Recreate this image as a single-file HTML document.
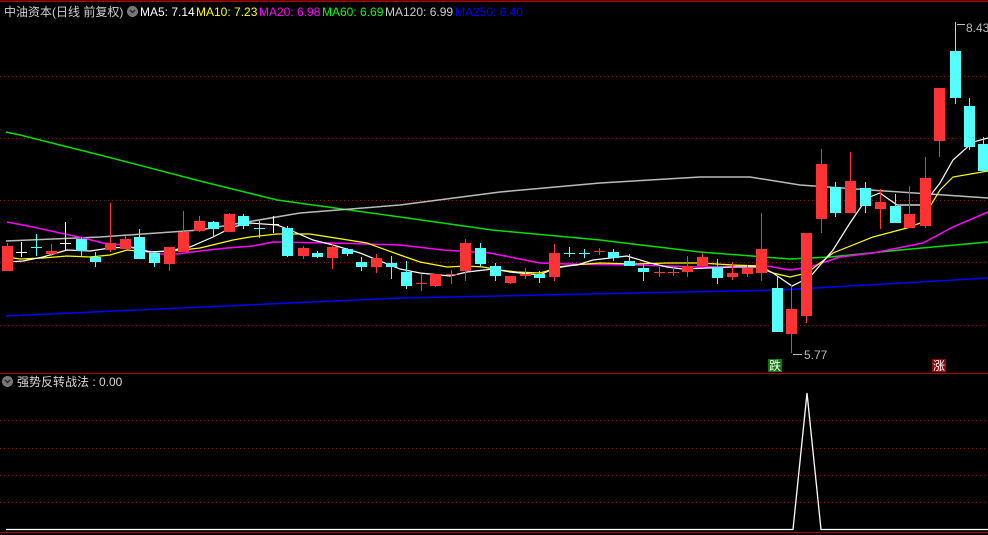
<!DOCTYPE html>
<html><head><meta charset="utf-8"><style>
html,body{margin:0;padding:0;background:#000;width:988px;height:535px;overflow:hidden}
svg{display:block}
text{font-family:"Liberation Sans","Noto Sans CJK SC",sans-serif;font-size:12px}
</style></head><body>
<svg width="988" height="535" viewBox="0 0 988 535" xmlns="http://www.w3.org/2000/svg" shape-rendering="crispEdges">
<rect width="988" height="535" fill="#000"/>
<line x1="0" y1="1" x2="988" y2="1" stroke="#b00000" stroke-width="1.5"/>
<g stroke="#8b1010" stroke-dasharray="1,3">
<line x1="0" y1="76.5" x2="988" y2="76.5"/><line x1="0" y1="138.5" x2="988" y2="138.5"/>
<line x1="0" y1="200.5" x2="988" y2="200.5"/><line x1="0" y1="262.5" x2="988" y2="262.5"/>
<line x1="0" y1="325.5" x2="988" y2="325.5"/>
<line x1="0" y1="420.5" x2="988" y2="420.5"/><line x1="0" y1="448.5" x2="988" y2="448.5"/>
<line x1="0" y1="475.5" x2="988" y2="475.5"/><line x1="0" y1="502.5" x2="988" y2="502.5"/>
</g>
<line x1="0" y1="373.5" x2="988" y2="373.5" stroke="#b00000"/>
<line x1="0" y1="532.5" x2="988" y2="532.5" stroke="#b00000"/>
<g fill="none" stroke-width="1.2" shape-rendering="auto">
<polyline stroke="#0000ff" stroke-width="1.5" points="6,316 400,298 780,290 988,278"/>
<polyline stroke="#00e000" stroke-width="1.5" points="6,132 20,135 100,155 200,181 277,200 400,217 492,230 600,240 700,252 790,259 830,257 900,250 988,242"/>
<polyline stroke="#bbbbbb" stroke-width="1.5" points="6,241 100,237 200,230 300,213 400,205 500,192 600,183 700,177 750,177 800,185 870,190 988,198"/>
<polyline stroke="#ff00ff" stroke-width="1.5" points="7,222 33,227 60,233 83,238 103,243 123,245 140,249 160,254 177,254 200,251 227,248 253,246 273,242 333,243 400,245 443,250 490,253 540,263 567,264 633,265 700,267 767,266 790,270 810,267 840,257 873,253 923,243 953,227 988,212"/>
<polyline stroke="#ffff00" points="7,257 20,259 43,258 67,256 90,257 110,255 127,250 150,252 173,251 200,248 233,240 250,237 277,234 310,234 367,243 400,255 420,262 447,267 467,266 483,267 500,270 517,272 540,273 557,268 573,265 600,263 633,264 667,263 700,263 733,265 760,266 773,273 790,277 807,273 833,253 873,237 907,228 920,223 940,190 953,177 988,171"/>
<polyline stroke="#ffffff" points="7,262 23,261 43,257 67,250 90,251 110,248 130,247 150,252 167,251 190,247 213,237 233,227 250,223 277,225 290,230 313,240 333,245 360,253 400,269 420,273 450,276 467,272 493,269 510,272 540,275 557,267 577,265 593,260 627,256 650,263 667,267 683,269 733,267 757,267 773,273 792,286 810,277 833,250 850,223 867,198 880,193 897,205 923,205 940,183 953,160 973,142 988,138"/>
</g>
<g>
<line x1="7.5" y1="243" x2="7.5" y2="271" stroke="#ff3333"/><rect x="2" y="246" width="11" height="25" fill="#ff3333"/>
<line x1="21.5" y1="242" x2="21.5" y2="257" stroke="#fff"/><rect x="16" y="252" width="11" height="1" fill="#fff"/>
<line x1="36.5" y1="234" x2="36.5" y2="256" stroke="#54ffff"/><rect x="31" y="247" width="11" height="1" fill="#54ffff"/>
<line x1="51.5" y1="244" x2="51.5" y2="256" stroke="#ff3333"/><rect x="46" y="251" width="11" height="3" fill="#ff3333"/>
<line x1="65.5" y1="222" x2="65.5" y2="251" stroke="#fff"/><rect x="60" y="243" width="11" height="1" fill="#fff"/>
<line x1="81.5" y1="237" x2="81.5" y2="257" stroke="#54ffff"/><rect x="76" y="239" width="11" height="12" fill="#54ffff"/>
<line x1="95.5" y1="252" x2="95.5" y2="267" stroke="#54ffff"/><rect x="90" y="257" width="11" height="5" fill="#54ffff"/>
<line x1="110.5" y1="203" x2="110.5" y2="252" stroke="#ff3333"/><rect x="105" y="243" width="11" height="7" fill="#ff3333"/>
<line x1="125.5" y1="236" x2="125.5" y2="249" stroke="#ff3333"/><rect x="120" y="239" width="11" height="10" fill="#ff3333"/>
<line x1="139.5" y1="229" x2="139.5" y2="259" stroke="#54ffff"/><rect x="134" y="237" width="11" height="22" fill="#54ffff"/>
<line x1="154.5" y1="252" x2="154.5" y2="267" stroke="#54ffff"/><rect x="149" y="253" width="11" height="10" fill="#54ffff"/>
<line x1="169.5" y1="247" x2="169.5" y2="271" stroke="#ff3333"/><rect x="164" y="247" width="11" height="17" fill="#ff3333"/>
<line x1="183.5" y1="211" x2="183.5" y2="252" stroke="#ff3333"/><rect x="178" y="232" width="11" height="20" fill="#ff3333"/>
<line x1="199.5" y1="216" x2="199.5" y2="232" stroke="#ff3333"/><rect x="194" y="221" width="11" height="10" fill="#ff3333"/>
<line x1="213.5" y1="221" x2="213.5" y2="237" stroke="#54ffff"/><rect x="208" y="222" width="11" height="7" fill="#54ffff"/>
<line x1="229.5" y1="213" x2="229.5" y2="232" stroke="#ff3333"/><rect x="224" y="214" width="11" height="18" fill="#ff3333"/>
<line x1="243.5" y1="214" x2="243.5" y2="229" stroke="#54ffff"/><rect x="238" y="216" width="11" height="10" fill="#54ffff"/>
<line x1="259.5" y1="221" x2="259.5" y2="238" stroke="#54ffff"/><rect x="254" y="228" width="11" height="1" fill="#54ffff"/>
<line x1="273.5" y1="216" x2="273.5" y2="233" stroke="#fff"/><rect x="268" y="224" width="11" height="1" fill="#fff"/>
<line x1="287.5" y1="226" x2="287.5" y2="257" stroke="#54ffff"/><rect x="282" y="228" width="11" height="28" fill="#54ffff"/>
<line x1="303.5" y1="246" x2="303.5" y2="259" stroke="#ff3333"/><rect x="298" y="248" width="11" height="8" fill="#ff3333"/>
<line x1="317.5" y1="251" x2="317.5" y2="258" stroke="#54ffff"/><rect x="312" y="253" width="11" height="4" fill="#54ffff"/>
<line x1="332.5" y1="243" x2="332.5" y2="269" stroke="#ff3333"/><rect x="327" y="247" width="11" height="11" fill="#ff3333"/>
<line x1="347.5" y1="248" x2="347.5" y2="256" stroke="#54ffff"/><rect x="342" y="249" width="11" height="5" fill="#54ffff"/>
<line x1="361.5" y1="257" x2="361.5" y2="271" stroke="#54ffff"/><rect x="356" y="262" width="11" height="5" fill="#54ffff"/>
<line x1="376.5" y1="254" x2="376.5" y2="273" stroke="#ff3333"/><rect x="371" y="258" width="11" height="9" fill="#ff3333"/>
<line x1="391.5" y1="256" x2="391.5" y2="279" stroke="#54ffff"/><rect x="386" y="263" width="11" height="4" fill="#54ffff"/>
<line x1="406.5" y1="261" x2="406.5" y2="289" stroke="#54ffff"/><rect x="401" y="272" width="11" height="14" fill="#54ffff"/>
<line x1="421.5" y1="274" x2="421.5" y2="291" stroke="#ff3333"/><rect x="416" y="283" width="11" height="1" fill="#ff3333"/>
<line x1="435.5" y1="274" x2="435.5" y2="287" stroke="#ff3333"/><rect x="430" y="274" width="11" height="12" fill="#ff3333"/>
<line x1="451.5" y1="270" x2="451.5" y2="284" stroke="#ff3333"/><rect x="446" y="274" width="11" height="1" fill="#ff3333"/>
<line x1="465.5" y1="239" x2="465.5" y2="281" stroke="#ff3333"/><rect x="460" y="243" width="11" height="28" fill="#ff3333"/>
<line x1="480.5" y1="243" x2="480.5" y2="267" stroke="#54ffff"/><rect x="475" y="248" width="11" height="16" fill="#54ffff"/>
<line x1="495.5" y1="263" x2="495.5" y2="281" stroke="#54ffff"/><rect x="490" y="266" width="11" height="10" fill="#54ffff"/>
<line x1="510.5" y1="276" x2="510.5" y2="284" stroke="#ff3333"/><rect x="505" y="276" width="11" height="7" fill="#ff3333"/>
<line x1="525.5" y1="268" x2="525.5" y2="279" stroke="#ff3333"/><rect x="520" y="274" width="11" height="2" fill="#ff3333"/>
<line x1="539.5" y1="271" x2="539.5" y2="283" stroke="#54ffff"/><rect x="534" y="274" width="11" height="4" fill="#54ffff"/>
<line x1="554.5" y1="244" x2="554.5" y2="281" stroke="#ff3333"/><rect x="549" y="253" width="11" height="24" fill="#ff3333"/>
<line x1="569.5" y1="247" x2="569.5" y2="257" stroke="#54ffff"/><rect x="564" y="253" width="11" height="1" fill="#54ffff"/>
<line x1="584.5" y1="249" x2="584.5" y2="258" stroke="#54ffff"/><rect x="579" y="253" width="11" height="1" fill="#54ffff"/>
<line x1="599.5" y1="248" x2="599.5" y2="255" stroke="#ff3333"/><rect x="594" y="251" width="11" height="1" fill="#ff3333"/>
<line x1="613.5" y1="249" x2="613.5" y2="261" stroke="#54ffff"/><rect x="608" y="252" width="11" height="6" fill="#54ffff"/>
<line x1="629.5" y1="254" x2="629.5" y2="266" stroke="#54ffff"/><rect x="624" y="261" width="11" height="5" fill="#54ffff"/>
<line x1="643.5" y1="264" x2="643.5" y2="281" stroke="#54ffff"/><rect x="638" y="268" width="11" height="4" fill="#54ffff"/>
<line x1="659.5" y1="267" x2="659.5" y2="277" stroke="#ff3333"/><rect x="654" y="272" width="11" height="1" fill="#ff3333"/>
<line x1="673.5" y1="266" x2="673.5" y2="276" stroke="#ff3333"/><rect x="668" y="272" width="11" height="1" fill="#ff3333"/>
<line x1="687.5" y1="256" x2="687.5" y2="277" stroke="#ff3333"/><rect x="682" y="266" width="11" height="6" fill="#ff3333"/>
<line x1="702.5" y1="253" x2="702.5" y2="268" stroke="#ff3333"/><rect x="697" y="257" width="11" height="9" fill="#ff3333"/>
<line x1="717.5" y1="259" x2="717.5" y2="284" stroke="#54ffff"/><rect x="712" y="267" width="11" height="11" fill="#54ffff"/>
<line x1="732.5" y1="262" x2="732.5" y2="280" stroke="#ff3333"/><rect x="727" y="273" width="11" height="4" fill="#ff3333"/>
<line x1="747.5" y1="265" x2="747.5" y2="277" stroke="#ff3333"/><rect x="742" y="268" width="11" height="6" fill="#ff3333"/>
<line x1="761.5" y1="213" x2="761.5" y2="281" stroke="#ff3333"/><rect x="756" y="249" width="11" height="24" fill="#ff3333"/>
<line x1="777.5" y1="277" x2="777.5" y2="332" stroke="#54ffff"/><rect x="772" y="288" width="11" height="44" fill="#54ffff"/>
<line x1="791.5" y1="285" x2="791.5" y2="353" stroke="#ff3333"/><rect x="786" y="309" width="11" height="25" fill="#ff3333"/>
<line x1="806.5" y1="233" x2="806.5" y2="323" stroke="#ff3333"/><rect x="801" y="233" width="11" height="83" fill="#ff3333"/>
<line x1="821.5" y1="149" x2="821.5" y2="233" stroke="#ff3333"/><rect x="816" y="164" width="11" height="55" fill="#ff3333"/>
<line x1="835.5" y1="182" x2="835.5" y2="217" stroke="#54ffff"/><rect x="830" y="187" width="11" height="26" fill="#54ffff"/>
<line x1="850.5" y1="152" x2="850.5" y2="213" stroke="#ff3333"/><rect x="845" y="181" width="11" height="32" fill="#ff3333"/>
<line x1="865.5" y1="182" x2="865.5" y2="213" stroke="#54ffff"/><rect x="860" y="188" width="11" height="18" fill="#54ffff"/>
<line x1="880.5" y1="189" x2="880.5" y2="229" stroke="#ff3333"/><rect x="875" y="202" width="11" height="7" fill="#ff3333"/>
<line x1="895.5" y1="194" x2="895.5" y2="223" stroke="#54ffff"/><rect x="890" y="206" width="11" height="17" fill="#54ffff"/>
<line x1="909.5" y1="186" x2="909.5" y2="228" stroke="#ff3333"/><rect x="904" y="214" width="11" height="14" fill="#ff3333"/>
<line x1="925.5" y1="157" x2="925.5" y2="228" stroke="#ff3333"/><rect x="920" y="178" width="11" height="48" fill="#ff3333"/>
<line x1="939.5" y1="88" x2="939.5" y2="157" stroke="#ff3333"/><rect x="934" y="88" width="11" height="53" fill="#ff3333"/>
<line x1="955.5" y1="22" x2="955.5" y2="104" stroke="#54ffff"/><rect x="950" y="51" width="11" height="47" fill="#54ffff"/>
<line x1="969.5" y1="98" x2="969.5" y2="150" stroke="#54ffff"/><rect x="964" y="106" width="11" height="41" fill="#54ffff"/>
<line x1="983.5" y1="137" x2="983.5" y2="171" stroke="#54ffff"/><rect x="978" y="144" width="11" height="27" fill="#54ffff"/>
</g>
<line x1="957" y1="24.5" x2="965" y2="24.5" stroke="#bbb"/>
<text x="966" y="32" fill="#bbb">8.43</text>
<line x1="793" y1="354.5" x2="802" y2="354.5" stroke="#bbb"/>
<text x="804" y="359" fill="#bbb">5.77</text>
<rect x="768" y="359" width="14" height="13" fill="#0a7a0a"/>
<text x="769" y="370" fill="#fff">跌</text>
<rect x="932" y="359" width="14" height="13" fill="#8a0a0a"/>
<text x="933" y="370" fill="#fff">涨</text>
<text x="4" y="16" fill="#d0d0d0">中油资本(日线 前复权)</text>
<circle cx="132.5" cy="11.5" r="5.5" fill="#777"/>
<polyline points="130,10 132.5,12.5 135,10" fill="none" stroke="#222" stroke-width="1.3" shape-rendering="auto"/>
<text x="140" y="16" fill="#fff">MA5: 7.14</text>
<text x="196" y="16" fill="#ffff00">MA10: 7.23</text>
<text x="259" y="16" fill="#ff00ff">MA20: 6.98</text>
<text x="322" y="16" fill="#00ff00">MA60: 6.69</text>
<text x="385" y="16" fill="#cccccc">MA120: 6.99</text>
<text x="455" y="16" fill="#0000ff">MA250: 6.40</text>
<circle cx="7.5" cy="381.5" r="5.5" fill="#777"/>
<polyline points="5,380 7.5,382.5 10,380" fill="none" stroke="#222" stroke-width="1.3" shape-rendering="auto"/>
<text x="17" y="386" fill="#d8d8d8">强势反转战法 : 0.00</text>
<polyline points="6,529.5 793,529.5 807,393 821,529.5 988,529.5" fill="none" stroke="#fff" stroke-width="1.3" shape-rendering="auto"/>
</svg>
</body></html>
